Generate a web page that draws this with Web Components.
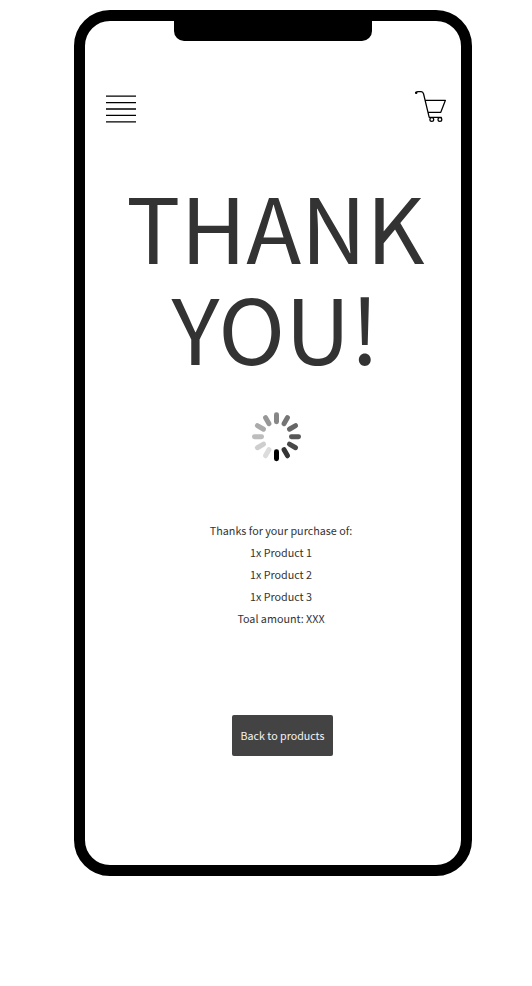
<!DOCTYPE html>
<html lang="en">
<head>
<meta charset="utf-8">
<title>Thank you</title>
<style>
body{margin:0;background:#fff;font-family:"Noto Sans CJK SC","Noto Sans CJK JP","Noto Sans",sans-serif;color:#333}
</style>
</head>
<body>
<phone-frame>
  <top-bar></top-bar>
  <thank-heading><span>THANK</span><span>YOU!</span></thank-heading>
  <load-spinner></load-spinner>
  <order-summary>
    <span>Thanks for your purchase of:</span>
    <span>1x Product 1</span>
    <span>1x Product 2</span>
    <span>1x Product 3</span>
    <span>Toal amount: XXX</span>
  </order-summary>
  <action-button>Back to products</action-button>
</phone-frame>
<script>
const define = (name, html) => customElements.define(name, class extends HTMLElement {
  constructor() {
    super();
    this.attachShadow({ mode: 'open' }).innerHTML = html;
  }
});

define('phone-frame', `
<style>
:host{display:block;padding:10px 0 0 74px;height:976px;box-sizing:border-box}
.shell{box-sizing:border-box;width:398px;height:866px;border:11px solid #000;border-radius:36px;background:#fff;display:flex;flex-direction:column}
.notch{width:198px;height:20px;margin-left:89px;background:#000;border-radius:0 0 10px 10px;flex:none}
main{display:flex;flex-direction:column;align-items:center}
</style>
<div class="shell"><div class="notch"></div><main><slot></slot></main></div>`);

define('top-bar', `
<style>
:host{display:flex;justify-content:space-between;align-self:stretch;margin-top:49px;padding:0 14px 0 21px;height:34px}
.menu{margin-top:4px}
svg{display:block}
</style>
<svg class="menu" width="30" height="30" viewBox="0 0 30 30" stroke="#000" stroke-width="1.3"><path d="M0 2.2H30M0 8.6H30M0 15H30M0 21.4H30M0 27.8H30"/></svg>
<svg width="33" height="34" viewBox="414 90 33 34" fill="none" stroke="#000" stroke-width="1.25" stroke-linecap="round" stroke-linejoin="round"><path d="M416 92.8Q417 91.7 418 91.7H421.2Q423 91.8 423.6 94L429.2 117.4H441.3M425.2 100.3H445.4L440.8 112.3H428"/><circle cx="416.2" cy="92.8" r=".6"/><circle cx="431.8" cy="119.5" r="1.9"/><circle cx="439.9" cy="119.5" r="1.9"/></svg>`);

define('thank-heading', `
<style>
:host{display:flex;flex-direction:column;align-items:center;font-size:90.3px;line-height:101px;margin-top:50px;height:202px;white-space:nowrap;margin-left:5px}
</style>
<slot></slot>`);

const shades = ['#868686','#757575','#666','#575757','#484848','#343434','#000','#dcdcdc','#cecece','#bdbdbd','#aaa','#979797'];
define('load-spinner', `
<style>:host{display:block;width:50px;height:50px;margin:36px 0 0 7px}svg{display:block}</style>
<svg width="50" height="50" viewBox="-24.5 -24.7 50 50">${shades.map((c, i) =>
  `<rect x="-2.5" y="-24.5" width="5" height="12" rx="2.4" fill="${c}" transform="rotate(${i * 30})"/>`).join('')}</svg>`);

define('order-summary', `
<style>
:host{display:flex;flex-direction:column;align-items:center;margin:58px 0 0 16px;font-size:10.75px;line-height:22px;white-space:nowrap}
</style>
<slot></slot>`);

define('action-button', `
<style>
:host{display:block;margin:85px 0 0 19px}
button{display:block;box-sizing:border-box;width:101px;height:41px;padding:0;border:0;border-radius:2px;background:#434343;color:#f4f4f4;font:inherit;font-size:10.7px;line-height:41px;white-space:nowrap}
</style>
<button><slot></slot></button>`);
</script>
</body>
</html>
